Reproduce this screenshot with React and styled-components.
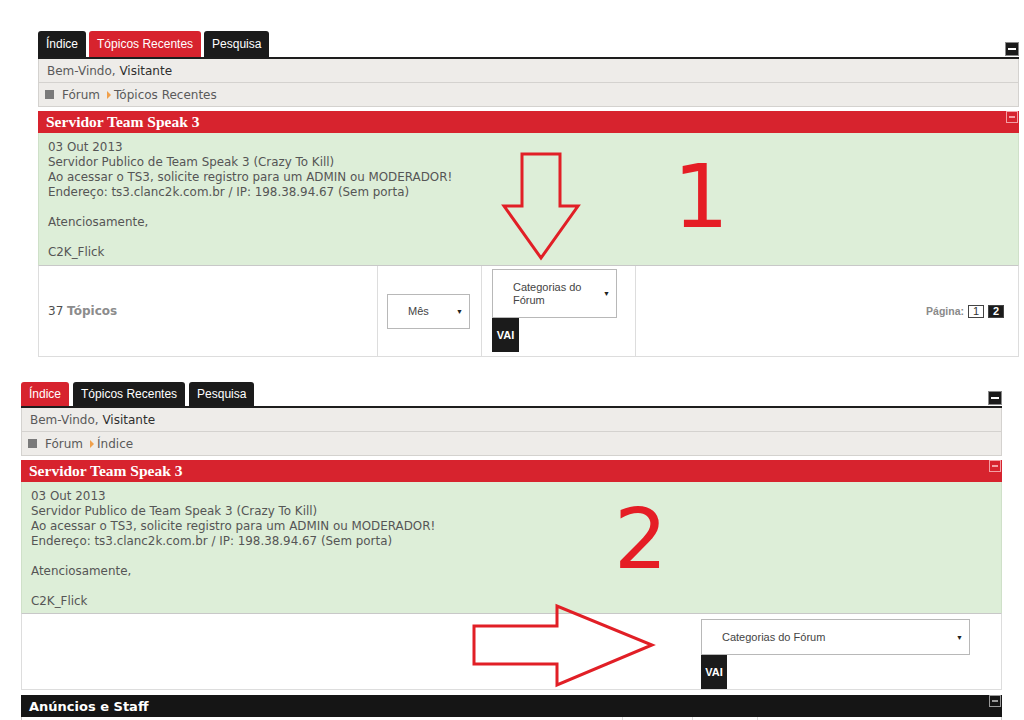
import styled, { createGlobalStyle } from "styled-components";

const GlobalStyle = createGlobalStyle`
  body {
    margin: 0;
    background: #ffffff;
    font-family: "DejaVu Sans", Verdana, sans-serif;
  }
`;

const RED = "#d7232e";

const Page = styled.div`
  width: 1024px;
  height: 720px;
  overflow: hidden;
  padding-top: 30px;
  box-sizing: border-box;
`;

const Shot = styled.section`
  position: relative;
  width: 981px;
  margin-left: ${(p) => p.$left}px;
  margin-bottom: ${(p) => p.$gap || 0}px;
`;

const TabBar = styled.div`
  display: flex;
  align-items: flex-end;
  gap: ${(p) => p.$gap}px;
  height: ${(p) => p.$h}px;
  border-bottom: 2px solid #1d1d1d;
`;

const Tab = styled.div`
  height: calc(100% - 1px);
  padding: 0 8px;
  display: flex;
  align-items: center;
  border-radius: 3px 3px 0 0;
  background: ${(p) => (p.$active ? RED : "#1b1b1b")};
  color: #ffffff;
  font: 12px "Liberation Sans", Arial, sans-serif;
`;

const Toggle = styled.span`
  margin-left: auto;
  width: ${(p) => p.$size || 12}px;
  height: ${(p) => p.$size || 12}px;
  box-sizing: border-box;
  border: 1px solid ${(p) => p.$border};
  background: ${(p) => p.$fill || "transparent"};
  display: flex;
  align-items: center;
  justify-content: center;
  align-self: ${(p) => p.$align || "center"};
  margin-bottom: ${(p) => p.$lift || 0}px;

  &::after {
    content: "";
    width: 60%;
    height: 2px;
    background: ${(p) => p.$dash || "#ffffff"};
  }
`;

const InfoRow = styled.div`
  height: 23px;
  line-height: 24px;
  padding-left: 8px;
  background: #eeece9;
  border: 1px solid #d4d2cf;
  border-top: none;
  color: #5a5a5a;
  font-size: 12px;
  white-space: nowrap;

  b {
    font-weight: normal;
    color: #2e2e2e;
  }
`;

const Square = styled.span`
  display: inline-block;
  vertical-align: middle;
  width: 9px;
  height: 9px;
  margin: -2px 8px 0 -2px;
  background: #7a7a7a;
`;

const Crumb = styled.span`
  display: inline-block;
  vertical-align: middle;
  width: 0;
  height: 0;
  margin: -2px 3px 0 7px;
  border-left: 4px solid #f0a04b;
  border-top: 4px solid transparent;
  border-bottom: 4px solid transparent;
`;

const CatHeader = styled.div`
  margin-top: ${(p) => p.$top}px;
  height: 22px;
  display: flex;
  align-items: center;
  padding: 0 1px 0 8px;
  background: ${(p) => (p.$dark ? "#151515" : RED)};
  color: #ffffff;
  font: bold ${(p) => (p.$dark ? "13px 'DejaVu Sans', Verdana" : "15.5px 'Liberation Serif', Georgia")}, sans-serif;
`;

const Notice = styled.div`
  height: ${(p) => p.$h}px;
  box-sizing: border-box;
  padding: 7px 9px 0;
  background: #ddeed8;
  border-left: 1px solid #cfe0c9;
  border-right: 1px solid #cfe0c9;
  color: #555555;
  font-size: 11.9px;
  line-height: 15px;

  p {
    margin: 0;
  }
`;

const Footer = styled.div`
  height: ${(p) => p.$h}px;
  display: grid;
  grid-template-columns: ${(p) => p.$cols};
  border: 1px solid #dddddd;
  border-top: 1px solid #c8c8c8;
  box-sizing: border-box;
  background: #ffffff;
`;

const Cell = styled.div`
  display: flex;
  flex-direction: column;
  justify-content: ${(p) => p.$v || "center"};
  align-items: ${(p) => p.$h || "flex-start"};
  padding: ${(p) => p.$pad || "0"};
  border-left: ${(p) => (p.$first ? "none" : "1px solid #dddddd")};
`;

const Count = styled.span`
  color: #4e4e4e;
  font-size: 12px;

  strong {
    color: #8c8c8c;
  }
`;

const Select = styled.div`
  width: ${(p) => p.$w}px;
  height: ${(p) => p.$hgt}px;
  box-sizing: border-box;
  border: 1px solid #b8b8b8;
  display: flex;
  align-items: center;
  padding: 0 6px 0 ${(p) => p.$indent}px;
  color: #444444;
  font: 11px/13px "Liberation Sans", Arial, sans-serif;

  span {
    flex: 1;
  }

  &::after {
    content: "▼";
    font-size: 7px;
    color: #222222;
  }
`;

const Go = styled.button`
  display: block;
  width: ${(p) => p.$w}px;
  height: 34px;
  border: none;
  padding: 0;
  background: #1b1b1b;
  color: #ffffff;
  font: bold 11px "Liberation Sans", Arial, sans-serif;
`;

const Pager = styled.div`
  display: flex;
  align-items: center;
  gap: 4px;
  color: #8a8a8a;
  font: bold 10.5px "Liberation Sans", Arial, sans-serif;
`;

const PageBox = styled.span`
  min-width: 16px;
  height: 13px;
  box-sizing: border-box;
  display: flex;
  align-items: center;
  justify-content: center;
  border: 1px solid #444444;
  background: ${(p) => (p.$on ? "#1b1b1b" : "#ffffff")};
  color: ${(p) => (p.$on ? "#ffffff" : "#333333")};
  font-size: 11px;
  font-weight: ${(p) => (p.$on ? "bold" : "normal")};
`;

const TableEdge = styled.div`
  height: 6px;
  border-left: 1px solid #cccccc;
  border-right: 1px solid #cccccc;
  display: grid;
  grid-template-columns: 600px 70px 65px 1fr;

  span + span {
    border-left: 1px solid #dddddd;
  }
`;

/* red annotation marks drawn over the panels */
const Mark = styled.span`
  position: absolute;
  left: ${(p) => p.$x}px;
  top: ${(p) => p.$y}px;
  color: #e51d25;
  font: ${(p) => p.$size}px/${(p) => p.$size}px "DejaVu Sans", sans-serif;
`;

const ArrowSvg = styled.svg`
  position: absolute;
  left: ${(p) => p.$x}px;
  top: ${(p) => p.$y}px;
  overflow: visible;
`;

const NoticeBody = () => (
  <>
    <p>03 Out 2013</p>
    <p>Servidor Publico de Team Speak 3 (Crazy To Kill)</p>
    <p>Ao acessar o TS3, solicite registro para um ADMIN ou MODERADOR!</p>
    <p>Endereço: ts3.clanc2k.com.br / IP: 198.38.94.67 (Sem porta)</p>
    <p>&nbsp;</p>
    <p>Atenciosamente,</p>
    <p>&nbsp;</p>
    <p>C2K_Flick</p>
  </>
);

const Tabs = ({ active, gap, h }) => (
  <TabBar $gap={gap} $h={h}>
    <Tab $active={active === "Índice"}>Índice</Tab>
    <Tab $active={active === "Tópicos Recentes"}>Tópicos Recentes</Tab>
    <Tab $active={active === "Pesquisa"}>Pesquisa</Tab>
    <Toggle $size={14} $border="#8a8a8a" $fill="#1b1b1b" $align="flex-end" $lift={1} />
  </TabBar>
);

const App = () => (
  <Page>
    <GlobalStyle />

    <Shot $left={38} $gap={24}>
      <Tabs active="Tópicos Recentes" gap={3} h={27} />
      <InfoRow>
        Bem-Vindo, <b>Visitante</b>
      </InfoRow>
      <InfoRow>
        <Square />
        Fórum<Crumb />Tópicos Recentes
      </InfoRow>
      <CatHeader $top={4}>
        Servidor Team Speak 3
        <Toggle $border="#f3a0a5" $dash="#f3a0a5" $align="flex-start" />
      </CatHeader>
      <Notice $h={132}>
        <NoticeBody />
      </Notice>
      <Footer $h={92} $cols="338px 104px 154px 1fr">
        <Cell $first $pad="0 0 0 9px">
          <Count>
            37 <strong>Tópicos</strong>
          </Count>
        </Cell>
        <Cell $pad="0 0 0 9px">
          <Select $w={83} $hgt={35} $indent={20}>
            <span>Mês</span>
          </Select>
        </Cell>
        <Cell $v="flex-start" $pad="3px 0 0 10px">
          <Select $w={125} $hgt={49} $indent={20}>
            <span>Categorias do Fórum</span>
          </Select>
          <Go $w={27}>VAI</Go>
        </Cell>
        <Cell $h="flex-end" $pad="0 14px 0 0">
          <Pager>
            Página:
            <PageBox>1</PageBox>
            <PageBox $on>2</PageBox>
          </Pager>
        </Cell>
      </Footer>

      <ArrowSvg $x={462} $y={121} width="82" height="110">
        <polygon
          points="22,3 60,3 60,55 78,55 41,107 4,55 22,55"
          fill="none"
          stroke="#e11f26"
          strokeWidth="3"
        />
      </ArrowSvg>
      <Mark $x={635} $y={123} $size={88}>1</Mark>
    </Shot>

    <Shot $left={21}>
      <Tabs active="Índice" gap={4} h={25} />
      <InfoRow>
        Bem-Vindo, <b>Visitante</b>
      </InfoRow>
      <InfoRow>
        <Square />
        Fórum<Crumb />Índice
      </InfoRow>
      <CatHeader $top={4}>
        Servidor Team Speak 3
        <Toggle $border="#f3a0a5" $dash="#f3a0a5" $align="flex-start" />
      </CatHeader>
      <Notice $h={131}>
        <NoticeBody />
      </Notice>
      <Footer $h={77} $cols="1fr">
        <Cell $first $v="flex-start" $h="flex-end" $pad="5px 31px 0 0">
          <div>
            <Select $w={269} $hgt={36} $indent={20}>
              <span>Categorias do Fórum</span>
            </Select>
            <Go $w={26}>VAI</Go>
          </div>
        </Cell>
      </Footer>
      <CatHeader $dark $top={5}>
        Anúncios e Staff
        <Toggle $border="#9a9a9a" $dash="#9a9a9a" $align="flex-start" />
      </CatHeader>
      <TableEdge>
        <span />
        <span />
        <span />
        <span />
      </TableEdge>

      <ArrowSvg $x={449} $y={222} width="186" height="86">
        <polygon
          points="4,23 87,23 87,3 182,42 87,82 87,61 4,61"
          fill="none"
          stroke="#e11f26"
          strokeWidth="3"
        />
      </ArrowSvg>
      <Mark $x={593} $y={116} $size={84}>2</Mark>
    </Shot>
  </Page>
);

export default App;
